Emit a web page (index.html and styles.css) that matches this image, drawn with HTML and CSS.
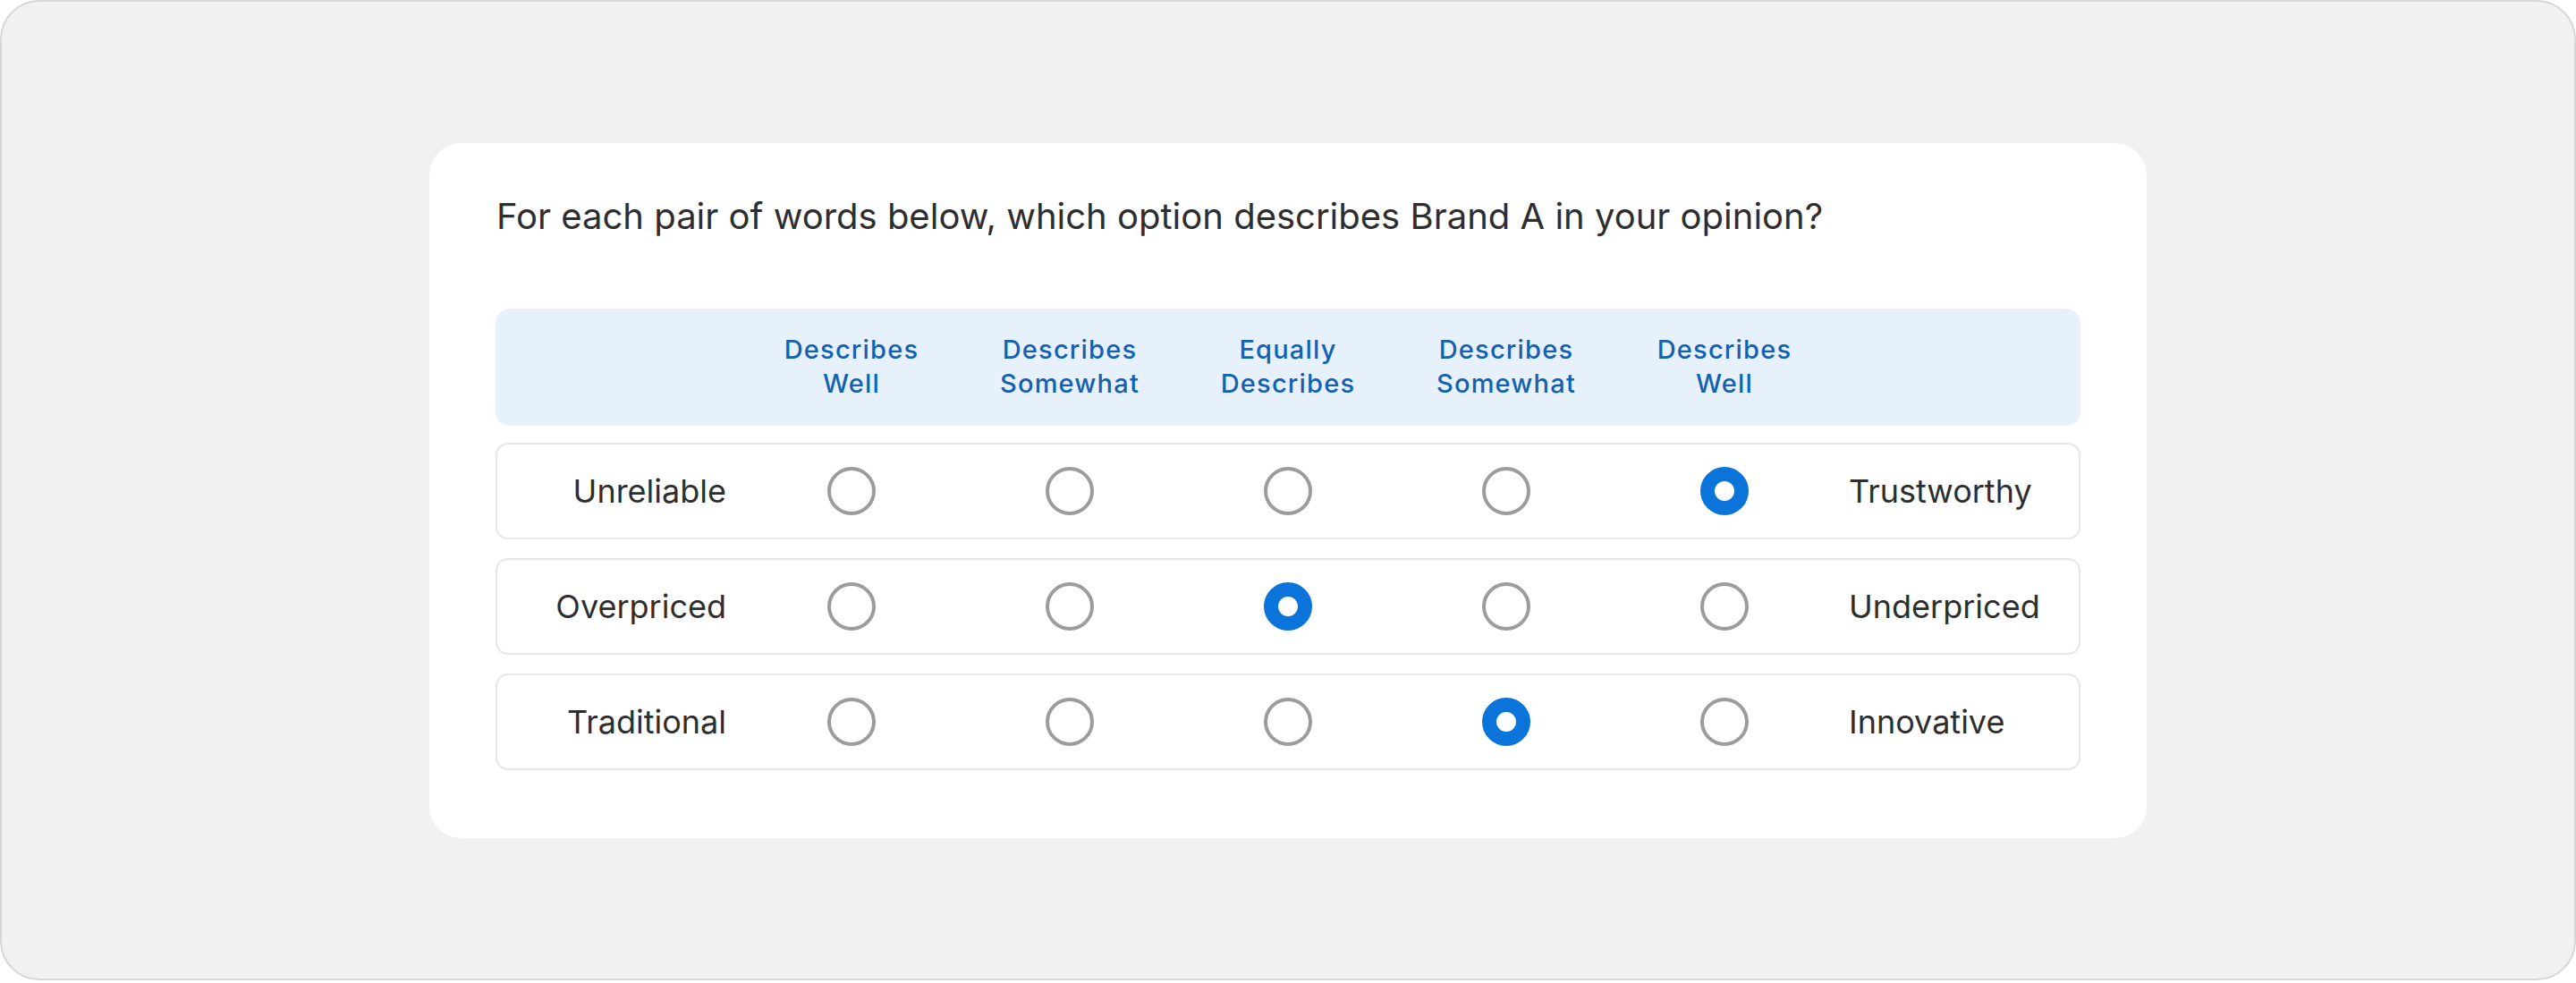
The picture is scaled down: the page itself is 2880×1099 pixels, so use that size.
FILE: index.html
```html
<!DOCTYPE html>
<html lang="en">
<head>
<meta charset="utf-8">
<title>Brand perception survey</title>
<link rel="stylesheet" href="styles.css">
</head>
<body>
<div class="frame">
  <div class="card">
    <p class="question">For each pair of words below, which option describes Brand A in your opinion?</p>
    <div class="scale-head">
      <div class="head-spacer"></div>
      <div class="head-cell">Describes<br>Well</div>
      <div class="head-cell">Describes<br>Somewhat</div>
      <div class="head-cell">Equally<br>Describes</div>
      <div class="head-cell">Describes<br>Somewhat</div>
      <div class="head-cell">Describes<br>Well</div>
      <div class="head-spacer"></div>
    </div>
    <div class="scale-row">
      <div class="label-left">Unreliable</div>
      <div class="cell"><span class="radio"></span></div>
      <div class="cell"><span class="radio"></span></div>
      <div class="cell"><span class="radio"></span></div>
      <div class="cell"><span class="radio"></span></div>
      <div class="cell"><span class="radio checked"></span></div>
      <div class="label-right">Trustworthy</div>
    </div>
    <div class="scale-row">
      <div class="label-left">Overpriced</div>
      <div class="cell"><span class="radio"></span></div>
      <div class="cell"><span class="radio"></span></div>
      <div class="cell"><span class="radio checked"></span></div>
      <div class="cell"><span class="radio"></span></div>
      <div class="cell"><span class="radio"></span></div>
      <div class="label-right">Underpriced</div>
    </div>
    <div class="scale-row">
      <div class="label-left">Traditional</div>
      <div class="cell"><span class="radio"></span></div>
      <div class="cell"><span class="radio"></span></div>
      <div class="cell"><span class="radio"></span></div>
      <div class="cell"><span class="radio checked"></span></div>
      <div class="cell"><span class="radio"></span></div>
      <div class="label-right">Innovative</div>
    </div>
  </div>
</div>
</body>
</html>
```
FILE: styles.css
```css
html, body {
  margin: 0;
  padding: 0;
  background: #ffffff;
}

body {
  font-family: "Inter", "Liberation Sans", sans-serif;
  color: #2e2e2e;
}

.frame {
  box-sizing: border-box;
  width: 2880px;
  height: 1096px;
  border: 2px solid #d6d6d6;
  border-radius: 44px;
  background: #f1f1f1;
  display: flex;
  align-items: center;
  justify-content: center;
}

.card {
  box-sizing: border-box;
  width: 1920px;
  background: #ffffff;
  border-radius: 36px;
  padding: 54px 74px 76px;
}

.question {
  margin: 0 0 75px;
  font-size: 40px;
  line-height: 56px;
  padding-left: 1px;
  color: #2e2e2e;
}

.scale-head,
.scale-row {
  display: grid;
  grid-template-columns: 1fr repeat(5, 244px) 1fr;
  align-items: center;
}

.scale-head {
  height: 131px;
  background: #e7f1fb;
  border-radius: 16px;
  margin-bottom: 19px;
}

.head-cell {
  text-align: center;
  font-size: 29px;
  font-weight: 500;
  line-height: 38px;
  color: #1361b2;
  letter-spacing: 1.2px;
}

.scale-row {
  box-sizing: border-box;
  height: 108px;
  border: 2px solid #e6e6e6;
  border-radius: 14px;
  margin-bottom: 21px;
}

.scale-row:last-child {
  margin-bottom: 0;
}

.label-left,
.label-right {
  font-size: 36px;
  line-height: 48px;
  color: #2e2e2e;
}

.label-left {
  text-align: right;
  padding-right: 18px;
}

.label-right {
  padding-left: 17px;
}

.cell {
  display: flex;
  justify-content: center;
  align-items: center;
}

.radio {
  box-sizing: border-box;
  width: 54px;
  height: 54px;
  border: 4px solid #9c9c9c;
  border-radius: 50%;
  background: #ffffff;
}

.radio.checked {
  border: 16px solid #0b74da;
  background: #ffffff;
}
```
